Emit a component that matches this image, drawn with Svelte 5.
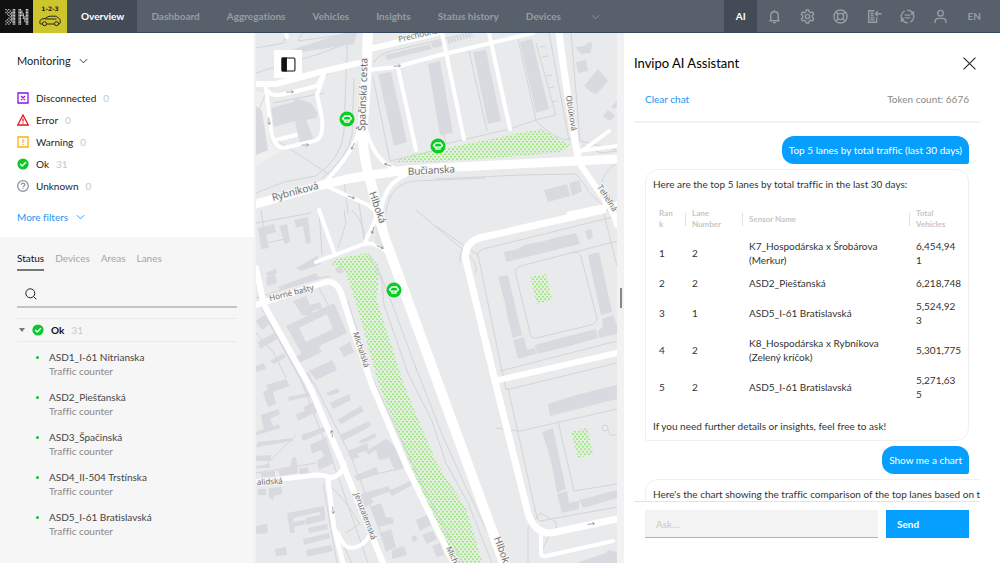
<script>
  const navItems = [
    "Overview",
    "Dashboard",
    "Aggregations",
    "Vehicles",
    "Insights",
    "Status history",
    "Devices",
  ];
  let activeNav = $state("Overview");

  const filters = [
    { name: "Disconnected", icon: "disconnected", count: 0 },
    { name: "Error", icon: "error", count: 0 },
    { name: "Warning", icon: "warning", count: 0 },
    { name: "Ok", icon: "ok", count: 31 },
    { name: "Unknown", icon: "unknown", count: 0 },
  ];

  const tabs = ["Status", "Devices", "Areas", "Lanes"];
  let activeTab = $state("Status");
  let search = $state("");
  let question = $state("");
  let groupOpen = $state(true);

  const devices = [
    "ASD1_I-61 Nitrianska",
    "ASD2_Piešťanská",
    "ASD3_Špačinská",
    "ASD4_II-504 Trstínska",
    "ASD5_I-61 Bratislavská",
  ];

  const columns = ["Ran\nk", "Lane\nNumber", "Sensor Name", "Total\nVehicles"];
  const lanes = [
    [1, 2, "K7_Hospodárska x Šrobárova\n(Merkur)", "6,454,94\n1"],
    [2, 2, "ASD2_Piešťanská", "6,218,748"],
    [3, 1, "ASD5_I-61 Bratislavská", "5,524,92\n3"],
    [4, 2, "K8_Hospodárska x Rybníkova\n(Zelený kríčok)", "5,301,775"],
    [5, 2, "ASD5_I-61 Bratislavská", "5,271,63\n5"],
  ];

  // dot matrix of the logo mark
  const logoDots = [
    "1.1..11..11...11",
    ".1.1.11..111..11",
    "1.1.111..111..11",
    ".1.1111..1111.11",
    "..1.111..1111.11",
    "...1111..11.1111",
    "..1.111..11.1111",
    ".1.1111..11..111",
    "1.1.111..11..111",
    ".1.1.11..11...11",
    "1.1..11..11...11",
  ];

  // thin footpaths and parcel borders
  const paths = [
    "M30 0 28 10 0 15M46 0 42 8 100 0M0 40 22 33 60 22 97 8",
    "M92 0 90 45 88 98Q86 125 60 143L28 149 0 160",
    "M98 45 96 102Q92 125 66 145M75 38 68 45 58 56",
    "M17 70 68 60M22 108 80 146M9 62 0 84",
    "M118 30Q122 20 140 17L200 3M117 44 134 128 180 117M176 30 190 112",
    "M213 18 231 98M262 6 280 87 300 82M280 87 254 96 180 113",
    "M280 88Q300 108 315 107M293 0 313 107M315 0 324 108 361 117M327 112 345 120 361 118",
    "M284 14 290 13M286 24 292 23M290 43 296 42M292 55 298 54M295 69 301 68M280 10 300 82",
    "M180 146 265 142 320 141Q328 150 334 160L352 178M361 130Q340 145 348 157L361 170",
    "M130 180Q133 150 160 148L230 145M0 190 55 180M5 177 10 210 34 205",
    "M63 177 66 222M88 177 90 190 82 215M96 177Q110 190 108 210M103 170 108 206",
    "M92 180 88 148M160 177 205 215Q223 228 220 240M180 193 222 222M204 230Q203 216 210 213",
    "M112 220 126 248 128 272 152 340 176 388 190 430 212 470 236 530",
    "M120 230 135 268 160 335 188 406 209 452 246 530",
    "M222 222Q220 217 235 214L361 183M222 222 250 357M244 338 361 308M250 357 361 330",
    "M260 242Q258 235 265 233L318 219Q323 218 325 224L341 285Q341 290 335 292L280 305Q275 306 274 300Z",
    "M347 177 361 233M315 220 361 208M344 180 358 174",
    "M240 395 264 398 361 376M252 355 281 485 284 488 361 474M302 388 318 458 361 451",
    "M272 495V530M272 495 285 480 300 489 300 498M286 517 293 503",
    "M12 288 70 392M4 272 44 345 78 432 112 530M58 350 96 426 131 516",
    "M92 268 112 335 129 372 170 460 212 540M0 265 63 245 74 243",
    "M70 450Q90 465 104 492M90 500 103 491M83 502 100 540M67 450 81 530M100 446 150 434M114 465 160 448",
    "M0 300 18 320 30 345M62 253 78 283M0 440 60 430M10 432 40 402",
  ];

  const buildings = [
    "M35 17 82 2 89 0H101L98 11 45 19Z",
    "M0 73 6 78 12 117 0 122Z",
    "M15 75 37 69 40 65 55 70 62 80 60 85 50 87 58 107 44 110 39 88 18 94Z",
    "M129 22 174 11 176 16 131 27Z",
    "M175 10 187 7 190 12 177 15Z",
    "M122 41 135 39 151 109 138 113Z",
    "M172 31 184 28 197 100 184 102Z",
    "M217 19 230 17 245 88 232 91Z",
    "M264 9 276 6 293 76 280 80Z",
    "M319 14 328 13 335 8 336 14 334 20 325 21Z",
    "M320 29 330 27 332 38 322 40Z",
    "M328 53 342 36 352 48 341 61 335 59Z",
    "M347 83 352 77 359 83 354 88ZM355 74 361 68V73L358 76Z",
    "M288 157 311 151 314 163 292 169ZM313 150 323 147 326 158 316 163Z",
    "M2 195 18 191 20 199 10 202 13 215 5 216Z",
    "M23 193 31 191 34 209 29 211ZM38 187 52 184 55 210 50 211 47 193 40 195Z",
    "M40 235 61 223 65 231 45 238ZM10 245 19 241 21 250 11 253ZM22 254 60 240 64 246 25 257Z",
    "M10 240 20 236 21 240 12 244ZM79 236 85 232 88 239 82 241Z",
    "M37 268 50 263 54 272 64 269 66 276 56 278 60 283 46 282Z",
    "M30 293 78 270 91 300 46 321ZM43 295 50 309 77 296 71 281Z",
    "M0 288 8 282 14 291 6 297ZM2 309 18 300 21 306 4 316ZM14 328 28 320 30 324 18 331Z",
    "M37 325 62 312 66 319 43 330ZM53 338 76 327 81 337 60 347ZM83 315 94 309 98 319 88 324Z",
    "M0 333 8 330 10 336 0 339ZM10 352 30 346 34 353 14 360ZM45 343 52 339 58 350 50 354Z",
    "M7 359 16 355 20 371 12 374ZM32 364 58 359 59 362 33 368ZM40 381 63 373 65 377 42 388Z",
    "M5 382 22 376 24 381 14 386 18 395 10 400 6 390ZM48 374 57 369 60 380 49 382Z",
    "M0 399 23 391 24 395 0 402ZM2 409 37 405 37 408 0 414ZM45 402 68 394 70 398 47 408Z",
    "M54 412 70 404 78 430 63 437 61 428 68 423 65 417 56 421Z",
    "M0 423 15 422V428H0ZM0 433 14 431V435H0ZM5 439 19 438V444H5ZM22 437 34 435 36 425 40 424 42 440 24 443ZM43 436 52 434 53 440 44 442Z",
    "M74 370 93 361 95 367 77 376ZM70 360 82 355 84 359 74 363ZM81 387 105 373 108 378 85 391ZM84 402 113 388 115 393 87 408Z",
    "M92 418 111 410 113 417 101 421 104 424 95 427ZM103 408 119 400 121 404 105 411ZM110 418 130 406 132 410 112 422Z",
    "M98 443 120 434 123 441 101 448ZM120 418 131 406 143 418 148 434 139 438 133 425 123 427Z",
    "M105 461 132 453 135 458 115 465 118 469 108 475ZM133 458 158 446 160 450 136 463Z",
    "M2 456 10 456V462H2ZM13 455 26 454 26 461 18 463 18 467 13 465Z",
    "M31 480 68 473 69 482 64 484V479L37 485 38 489 49 487V491L38 494 39 500 34 500Z",
    "M0 493 11 491 12 500 0 501ZM19 516 30 514 31 522 20 523Z",
    "M50 485 69 481V487L50 492ZM52 495 71 491 72 496 53 500ZM47 506 73 500 74 505 48 512ZM50 517 75 512 77 518 51 524Z",
    "M114 474 125 470 130 484 137 485 138 490 123 494ZM124 500 135 496 140 514 130 519ZM136 517 148 513 151 522 136 526Z",
    "M160 487 171 482 175 492 164 498ZM166 502 177 498 181 506 171 511ZM176 513 184 510 188 522 181 524ZM155 504 160 502 162 507 157 509Z",
    "M248 219 262 216 268 212 288 208 302 204 320 200 324 211 250 229Z",
    "M329 198 335 196 337 205 332 207Z",
    "M242 244 252 242 266 302 257 305 252 286 249 270Z",
    "M257 307 268 304 271 317 279 315 280 321 262 326Z",
    "M279 312 301 306 340 296 342 305 310 314 281 321Z",
    "M332 222 343 219 356 279 345 282 339 255 336 242Z",
    "M342 298 347 294 346 286 357 282 361 293V301L343 305Z",
    "M292 371 320 362 361 352V366L294 383Z",
    "M286 399 297 395 310 456 301 460 298 444 294 424Z",
    "M301 461 311 458 313 470 323 468 323 476 306 480Z",
    "M323 467 361 457V465L327 475Z",
    "M320 530 350 520 352 517 361 519V530Z",
  ];

  const roads = [
    { d: "M112 -5Q110 60 106 100Q108 128 115 150L128 203 248 530", w: 10 },
    { d: "M0 171 70 151Q92 145 115 142L152 137 180 135 320 128 361 126", w: 9 },
    { d: "M0 51H20L68 38 103 30", w: 6 },
    { d: "M112 37 140 34 184 22 277 0", w: 4 },
    { d: "M114 16 181 0", w: 6 },
    { d: "M28 -5 31 4M10 55 15 97Q18 115 28 115L58 108Q68 106 66 85L61 62 68 42", w: 4 },
    { d: "M12 58Q15 64 29 61L61 53 67 42M20 107 40 102", w: 4 },
    { d: "M142 35 160 117M186 0 208 106M233 0 254 96", w: 4 },
    { d: "M303 0Q312 70 322 125", w: 7 },
    { d: "M322 128 361 185", w: 6 },
    { d: "M322 118 361 113M327 117 353 98", w: 4 },
    { d: "M103 97Q98 118 70 148M110 97Q122 138 150 137", w: 4 },
    { d: "M70 153 112 172 125 182M150 142Q128 150 124 182", w: 4 },
    { d: "M63 177 78 219M60 229 108 211 118 190 122 177M108 211Q120 208 133 221", w: 4 },
    { d: "M0 272 70 249Q80 247 85 260L98 300 116 352 150 432 200 535", w: 6 },
    { d: "M0 235 8 272 53 352 83 422 129 535", w: 6 },
    { d: "M0 449 60 442Q70 442 74 445 88 442 88 430M72 447 78 495 87 530", w: 5 },
    { d: "M82 500Q88 518 100 514 108 512 114 502", w: 4 },
    { d: "M347 177 223 205Q207 211 210 228L240 352 272 480Q278 500 295 500L361 486", w: 7 },
    { d: "M313 181 361 171M352 168 361 193", w: 5 },
    { d: "M243 347 361 320", w: 6 },
    { d: "M285 502V520Q285 524 290 523L357 508", w: 4 },
  ];

  const parks = [
    "M138 129 155 122 180 117 285 96 314 112 305 119 240 125 180 129Z",
    "M75 229 83 225 112 220 122 232 122 255 120 265 148 352 180 429 210 475 227 532H200L166 460 123 352 100 270 90 240 76 231Z",
    "M274 244 290 241 296 267 281 271Z",
    "M315 399 331 395 337 421 322 425Z",
  ];

  const streets = [
    { name: "Prechodná", x: 143, y: 9, angle: -13, size: 8 },
    { name: "Špačinská cesta", x: 109, y: 98, angle: -88, size: 10 },
    { name: "Bučianska", x: 152, y: 142, angle: -3, size: 10 },
    { name: "Rybníková", x: 17, y: 168, angle: -15, size: 10 },
    { name: "Hlboká", x: 113, y: 160, angle: 71, size: 10 },
    { name: "Oblúková", x: 310, y: 63, angle: 81, size: 8 },
    { name: "Teheľná", x: 341, y: 154, angle: 57, size: 8 },
    { name: "Horné bašty", x: 14, y: 268, angle: -14, size: 8 },
    { name: "Michalská", x: 97, y: 300, angle: 72, size: 8 },
    { name: "alidská", x: 1, y: 452, angle: -3, size: 8 },
    { name: "Jeruzalemská", x: 98, y: 461, angle: 69, size: 8 },
    { name: "Michalská", x: 190, y: 515, angle: 65, size: 8 },
    { name: "Hlboká", x: 238, y: 505, angle: 70, size: 10 },
  ];

  const arrows = [
    [34, 59, -5],
    [13, 88, 85],
    [49, 112, -3],
    [97, 113, 115],
    [132, 132, 200],
    [95, 164, 20],
    [141, 33, -5],
    [117, 197, 110],
    [124, 214, 22],
    [76, 401, 260],
    [77, 477, 85],
    [335, 491, -8],
  ];

  const markers = [
    [91, 86],
    [182, 113],
    [138, 257],
  ];
</script>

{#snippet chevron()}
  <svg class="chevron" viewBox="0 0 10 6" aria-hidden="true">
    <path d="m1 1 4 4 4-4" />
  </svg>
{/snippet}

{#snippet statusIcon(kind)}
  <svg class="status-icon {kind}" viewBox="0 0 12 12" aria-hidden="true">
    {#if kind === "disconnected"}
      <path d="M1 1h10v10H1zM4 4l4 4M8 4 4 8" />
    {:else if kind === "error"}
      <path d="M6 1 11.3 11H.7zM6 4.5v3M6 8.6v1" />
    {:else if kind === "warning"}
      <path d="M1 1h10v10H1zM6 3.2v3.6M6 7.8V9" />
    {:else if kind === "ok"}
      <circle cx="6" cy="6" r="5.6" />
      <path d="m3.2 6 2 2 3.7-3.8" />
    {:else}
      <circle cx="6" cy="6" r="5.3" />
      <path d="M4.3 4.8c0-2.3 3.5-2.1 3.5 0C7.8 6 6 6 6 7.3M6 8.2v1" />
    {/if}
  </svg>
{/snippet}

<div class="app">
  <header class="topbar">
    <a class="topbar__logo" href="#home" aria-label="Home">
      <svg viewBox="0 0 32 22" aria-hidden="true">
        {#each logoDots as row, y}
          {#each row as dot, x}
            {#if dot === "1"}
              <rect x={x * 2} y={y * 2} width="1.6" height="1.6" />
            {/if}
          {/each}
        {/each}
      </svg>
    </a>
    <a class="topbar__product" href="#traffic" aria-label="Traffic">
      <svg viewBox="0 0 34 33" aria-hidden="true">
        <text x="17" y="11" text-anchor="middle">1-2-3</text>
        <path
          d="M9.5 24H8q-1.5 0-1.2-1.5l.4-2q.3-1 1.5-1.3l4-1q2.500-2 4.500-2h5q1.500 0 2.500 1l2 2q.8 1 .6 2.500l-.3 1.500q-.2.800-1.200.800h-.6M13.500 24h8M12 19h11.500"
        />
        <circle cx="11.5" cy="23.7" r="2" />
        <circle cx="23.5" cy="23.7" r="2" />
      </svg>
    </a>
    <nav class="topbar__nav">
      {#each navItems as item}
        <button class:active={activeNav === item} onclick={() => (activeNav = item)}>
          {item}
        </button>
      {/each}
      <button class="topbar__more" aria-label="More">{@render chevron()}</button>
    </nav>
    <div class="topbar__tools">
      <button class="active">AI</button>
      <button aria-label="Notifications">
        <svg viewBox="0 0 16 16"><path d="M2.5 12.5h11M4 12V7q0-4 4-4t4 4v5M8 3V1.2M6.5 14.5h3" /></svg>
      </button>
      <button aria-label="Settings">
        <svg viewBox="0 0 16 16">
          <path
            d="M6.700 1h2.600l.5 2 1.500.9 2-.6 1.300 2.300L13.100 7.100v1.800l1.500 1.500-1.300 2.300-2-.6-1.500.9-.5 2H6.700l-.5-2-1.500-.9-2 .6-1.300-2.300 1.500-1.500V7.100L1.400 5.600l1.300-2.300 2 .6L6.200 3z"
          />
          <circle cx="8" cy="8" r="2.3" />
        </svg>
      </button>
      <button aria-label="Help">
        <svg viewBox="0 0 16 16">
          <circle cx="8" cy="8" r="7" />
          <circle cx="8" cy="8" r="3.3" />
          <path d="m3.2 3.2 2.4 2.4M12.8 3.2l-2.4 2.4M3.2 12.8l2.4-2.4M12.8 12.8l-2.4-2.4" />
        </svg>
      </button>
      <button aria-label="Import report">
        <svg viewBox="0 0 16 16">
          <path d="M8 1.800H1.800v12.400h8.400V9M3.800 4.500H7M3.800 6.800H7M3.800 9h4M3.800 11.500h4M15.500 5H9M11.500 2.300 9 5l2.500 2.700" />
        </svg>
      </button>
      <button aria-label="Synchronisation">
        <svg viewBox="0 0 16 16">
          <path d="M5 2A6.700 6.700 0 0 0 3 12.500M3.300 9.600v3H.5M7.500 1.200A6.700 6.700 0 0 1 13.500 4.500M11 14A6.700 6.700 0 0 0 13 3.500M12.700 6.400v-3h2.800M8.500 14.800A6.700 6.700 0 0 1 4 13.200M5 6.500h6M5 9.500h6" />
        </svg>
      </button>
      <button aria-label="Account">
        <svg viewBox="0 0 16 16"><circle cx="8" cy="4.5" r="3" /><path d="M2.3 15v-1.5q0-3.500 3.500-3.500h4.400q3.500 0 3.500 3.500V15" /></svg>
      </button>
      <button>EN</button>
    </div>
  </header>

  <main class="workspace">
    <aside class="sidebar">
      <section class="monitoring">
        <button class="monitoring__title">Monitoring {@render chevron()}</button>
        <ul class="monitoring__filters">
          {#each filters as filter}
            <li>
              {@render statusIcon(filter.icon)}
              <span>{filter.name}</span>
              <span class="count">{filter.count}</span>
            </li>
          {/each}
        </ul>
        <button class="monitoring__more">More filters {@render chevron()}</button>
      </section>

      <section class="devices">
        <div class="devices__tabs">
          {#each tabs as tab}
            <button class:active={activeTab === tab} onclick={() => (activeTab = tab)}>{tab}</button>
          {/each}
        </div>
        <label class="devices__search">
          <svg viewBox="0 0 12 12" aria-hidden="true"><circle cx="5.3" cy="5.3" r="4.5" /><path d="m8.5 8.5 2.8 2.8" /></svg>
          <input type="text" aria-label="Search" bind:value={search} />
        </label>
        <button class="devices__group" onclick={() => (groupOpen = !groupOpen)}>
          <span class="caret"></span>
          {@render statusIcon("ok")}
          <span>Ok</span>
          <span class="count">31</span>
        </button>
        {#if groupOpen}
          <ul class="devices__list">
            {#each devices as device}
              <li>
                <span class="name">{device}</span>
                <span class="type">Traffic counter</span>
              </li>
            {/each}
          </ul>
        {/if}
      </section>
    </aside>

    <section class="map">
      <svg class="map__canvas" viewBox="0 0 361 530" preserveAspectRatio="xMinYMin slice" role="img" aria-label="Map">
        <defs>
          <pattern id="grass" width="4" height="5" patternUnits="userSpaceOnUse">
            <rect width="4" height="5" fill="#e3efdf" />
            <circle cx="1" cy="1.2" r="0.9" fill="#8fe66a" />
            <circle cx="3" cy="3.7" r="0.9" fill="#8fe66a" />
          </pattern>
        </defs>
        <path d="M0 58 8 60 14 110 26 118 0 133Z" fill="#eff0ef" />
        {#each parks as d}
          <path {d} fill="url(#grass)" />
        {/each}
        {#each paths as d}
          <path {d} class="path" />
        {/each}
        {#each buildings as d}
          <path {d} class="building" />
        {/each}
        {#each roads as road}
          <path d={road.d} class="road" stroke-width={road.w} />
        {/each}
        <path d="M120 192 128 215 119 211Z" fill="#e2e3e6" />
        <path d="M192 8 216 1" class="parking" />
        <circle cx="349" cy="395" r="3" class="path" />
        <path d="m352 397 2 5h7" class="path" />
        {#each arrows as [x, y, angle]}
          <path d="M-3.5 0h7M1.5-1.5l2 1.5-2 1.5" class="arrow" transform="translate({x} {y}) rotate({angle})" />
        {/each}
        {#each streets as street}
          <text font-size={street.size} transform="translate({street.x} {street.y}) rotate({street.angle})">
            {street.name}
          </text>
        {/each}
        {#each markers as [x, y]}
          <g class="marker" transform="translate({x} {y})">
            <circle r="7.5" />
            <path d="M-4.5-.5-2-3h4.500l2 2.500L3 1.200h-6zM-2.500 3.200h5M-2 .8v2.400M2 .8v2.400" />
          </g>
        {/each}
      </svg>
      <button class="map__toggle" aria-label="Toggle sidebar">
        <svg viewBox="0 0 14 14"><rect x="1" y="1" width="12" height="12" rx="1" /><path d="M1 1h4v12H1z" /></svg>
      </button>
    </section>

    <div class="divider"><span></span></div>

    <section class="assistant">
      <div class="assistant__header">
        <h2>Invipo AI Assistant</h2>
        <button aria-label="Close">
          <svg viewBox="0 0 12 12"><path d="m.5.5 11 11M11.5.5l-11 11" /></svg>
        </button>
      </div>
      <div class="assistant__bar">
        <button>Clear chat</button>
        <span>Token count: 6676</span>
      </div>
      <div class="assistant__chat">
        <p class="question">Top 5 lanes by total traffic (last 30 days)</p>
        <div class="answer">
          <p>Here are the top 5 lanes by total traffic in the last 30 days:</p>
          <table>
            <thead>
              <tr>
                {#each columns as column}
                  <th><span>{column}</span></th>
                {/each}
              </tr>
            </thead>
            <tbody>
              {#each lanes as lane}
                <tr>
                  {#each lane as cell}
                    <td>{cell}</td>
                  {/each}
                </tr>
              {/each}
            </tbody>
          </table>
          <p>If you need further details or insights, feel free to ask!</p>
        </div>
        <p class="question">Show me a chart</p>
        <div class="answer answer--wide">
          <p>Here's the chart showing the traffic comparison of the top lanes based on total vehicles:</p>
        </div>
      </div>
      <form class="assistant__form" onsubmit={(e) => e.preventDefault()}>
        <input type="text" placeholder="Ask..." aria-label="Ask" bind:value={question} />
        <button>Send</button>
      </form>
    </section>
  </main>
</div>

<style>
  :global(body) {
    margin: 0;
  }

  .app {
    display: flex;
    flex-direction: column;
    height: 100vh;
    overflow: hidden;
    font-family: Lato, "Liberation Sans", sans-serif;
    font-size: 10px;
    line-height: 14px;
    font-variant-ligatures: none;
    color: #222;
    background: #fff;
  }

  button,
  input {
    font: inherit;
    color: inherit;
    background: none;
    border: 0;
    border-radius: 0;
    margin: 0;
    padding: 0;
    outline: none;
  }

  button {
    cursor: pointer;
  }

  ul {
    list-style: none;
    margin: 0;
    padding: 0;
  }

  p,
  h2 {
    margin: 0;
  }

  svg {
    fill: none;
    stroke: currentColor;
  }

  .chevron {
    width: 9px;
    height: 6px;
  }

  .count {
    color: #c8c8c8;
  }

  /* top bar */
  .topbar {
    display: flex;
    flex: none;
    height: 33px;
    box-sizing: border-box;
    background: #58616b;
    border-bottom: 1px solid #32485c;
    color: #979da3;
    font-weight: bold;
  }

  .topbar__logo,
  .topbar__product {
    display: flex;
    align-items: center;
    justify-content: center;
    width: 33px;
    height: 33px;
    background: #111;
  }

  .topbar__logo svg {
    width: 24px;
    height: 16px;
    fill: #ddd;
    stroke: none;
  }

  .topbar__product {
    width: 34px;
    background: #cdc52b;
    color: #222;
  }

  .topbar__product svg {
    width: 34px;
    height: 33px;
  }

  .topbar__product text {
    font-family: "DejaVu Sans", sans-serif;
    font-size: 6px;
    font-weight: bold;
    fill: #222;
    stroke: none;
  }

  .topbar__nav {
    display: flex;
    flex: 1;
  }

  .topbar__nav button {
    padding: 0 13px 0 14px;
  }

  .topbar__nav .topbar__more {
    padding: 0 17px;
  }

  .topbar button.active {
    background: #424b56;
    color: #fff;
  }

  .topbar__tools {
    display: flex;
    width: 267px;
    padding-right: 9px;
  }

  .topbar__tools button {
    display: flex;
    flex: 1;
    align-items: center;
    justify-content: center;
  }

  .topbar__tools svg {
    width: 15px;
    height: 15px;
    stroke-width: 1.5;
  }

  .workspace {
    display: flex;
    flex: 1;
    min-height: 0;
  }

  /* sidebar */
  .sidebar {
    display: flex;
    flex-direction: column;
    flex: none;
    width: 254px;
    border-right: 2px solid #f1f1f1;
  }

  .monitoring {
    padding: 21px 17px 13px;
  }

  .monitoring__title {
    display: flex;
    align-items: center;
    gap: 8px;
    font-size: 11px;
  }

  .monitoring__filters {
    padding: 19px 0 13px;
  }

  .monitoring__filters li {
    display: flex;
    align-items: center;
    gap: 7px;
    height: 22px;
  }

  .monitoring__more {
    display: flex;
    align-items: center;
    gap: 8px;
    color: #1c94f4;
  }

  .status-icon {
    width: 12px;
    height: 12px;
    stroke-width: 1.3;
  }

  .disconnected {
    color: #8a12e8;
  }

  .error {
    color: #e8141e;
  }

  .warning {
    color: #ffae0d;
  }

  .unknown {
    color: #8d96a5;
  }

  .ok circle {
    fill: #0cc82c;
    stroke: none;
  }

  .ok path {
    stroke: #fff;
    stroke-width: 1.5;
  }

  .devices {
    flex: 1;
    padding: 12px 17px;
    background: #f6f6f6;
  }

  .devices__tabs {
    display: flex;
    gap: 11px;
    color: #a5a5a5;
  }

  .devices__tabs button {
    padding: 2px 0 4px;
    border-bottom: 2px solid transparent;
  }

  .devices__tabs .active {
    color: #111;
    border-color: #777;
  }

  .devices__search {
    display: flex;
    align-items: center;
    gap: 8px;
    height: 25px;
    padding: 10px 0 0 8px;
    border-bottom: 2px solid #c4c4c4;
  }

  .devices__search svg {
    width: 12px;
    height: 12px;
  }

  .devices__search input {
    flex: 1;
    min-width: 0;
  }

  .devices__group {
    display: flex;
    align-items: center;
    gap: 7px;
    width: 100%;
    height: 24px;
    margin-top: 10px;
    padding-left: 2px;
    border-top: 1px solid #eaeaea;
    border-bottom: 1px solid #eaeaea;
    color: #111;
    font-weight: bold;
  }

  .devices__group .count {
    font-weight: normal;
  }

  .caret {
    border: 3px solid transparent;
    border-top: 4px solid #777;
    border-bottom: 0;
  }

  .devices__list {
    padding-top: 8px;
  }

  .devices__list li {
    position: relative;
    display: flex;
    flex-direction: column;
    padding: 0 0 12px 32px;
  }

  .devices__list li::before {
    content: "";
    position: absolute;
    top: 6px;
    left: 19px;
    width: 3px;
    height: 3px;
    border-radius: 50%;
    background: #0cc82c;
  }

  .devices__list .name {
    color: #444;
  }

  .devices__list .type {
    color: #888;
  }

  /* map */
  .map {
    position: relative;
    flex: 1;
    min-width: 0;
    background: #e9eaec;
    overflow: hidden;
  }

  .map__canvas {
    display: block;
    width: 100%;
    height: 100%;
    stroke: none;
  }

  .map__canvas text {
    fill: #666;
    stroke: #f6f6f6;
    stroke-width: 2;
    paint-order: stroke;
    font-family: "Open Sans", sans-serif;
  }

  .path {
    stroke: #d2d4d7;
  }

  .building {
    fill: #d9dadf;
    fill-rule: evenodd;
  }

  .road {
    stroke: #fff;
    stroke-linecap: round;
    stroke-linejoin: round;
  }

  .parking {
    stroke: #d5d7db;
    stroke-width: 6;
    stroke-dasharray: 2 1;
  }

  .arrow {
    stroke: #888;
    stroke-width: 0.7;
  }

  .marker circle {
    fill: #08cf22;
  }

  .marker path {
    stroke: #fff;
    stroke-width: 1.3;
  }

  .map__toggle {
    position: absolute;
    top: 17px;
    left: 18px;
    display: flex;
    align-items: center;
    justify-content: center;
    width: 28px;
    height: 28px;
    background: #fff;
    color: #111;
  }

  .map__toggle svg {
    width: 15px;
    height: 15px;
  }

  .map__toggle path {
    fill: #111;
  }

  .divider {
    display: flex;
    flex: none;
    align-items: center;
    justify-content: center;
    width: 7px;
    background: #f2f2f2;
  }

  .divider span {
    width: 2px;
    height: 20px;
    background: #888;
  }

  /* assistant */
  .assistant {
    display: flex;
    flex-direction: column;
    flex: none;
    width: 376px;
    box-sizing: border-box;
    padding: 20px 20px 25px 10px;
    color: #333;
  }

  .assistant__header {
    display: flex;
    align-items: center;
    justify-content: space-between;
    padding-right: 4px;
    height: 20px;
  }

  .assistant__header h2 {
    font-size: 13px;
    font-weight: normal;
    color: #000;
  }

  .assistant__header svg {
    display: block;
    width: 13px;
    height: 13px;
    color: #222;
  }

  .assistant__bar {
    display: flex;
    justify-content: space-between;
    padding: 19px 11px 15px;
    border-bottom: 2px solid #f2f2f2;
    color: #8a8a8a;
  }

  .assistant__bar button {
    color: #1c94f4;
  }

  .assistant__chat {
    display: flex;
    flex-direction: column;
    flex: 1;
    min-height: 0;
    padding: 13px 0 0 11px;
    overflow: hidden;
    border-bottom: 1px solid #e4e4e4;
  }

  .question {
    flex: none;
    align-self: flex-end;
    margin-right: 11px;
    padding: 7px;
    border-radius: 12px 12px 2px 12px;
    background: #069ffd;
    color: #fff;
  }

  .answer {
    flex: none;
    margin: 5px 11px 5px 0;
    padding: 7px;
    border: 1px solid #f0f0f0;
    border-radius: 13px 13px 13px 2px;
  }

  .answer--wide {
    margin-right: -60px;
    white-space: nowrap;
  }

  table {
    width: 100%;
    margin: 17px 0 14px;
    border-collapse: collapse;
    table-layout: fixed;
  }

  th,
  td {
    padding: 5px 0 4px 6px;
    text-align: left;
    white-space: pre-line;
  }

  th {
    padding: 0 0 4px;
    font-size: 8px;
    line-height: 11px;
    color: #c6c6c6;
  }

  th span {
    display: flex;
    align-items: center;
    height: 22px;
    padding-left: 6px;
  }

  th + th span::before {
    content: "";
    align-self: center;
    width: 1px;
    height: 13px;
    margin: 0 6px 0 -7px;
    background: #e2e2e2;
  }

  th:nth-child(1) {
    width: 33px;
  }

  th:nth-child(2) {
    width: 57px;
  }

  th:nth-child(4) {
    width: 51px;
  }

  .assistant__form {
    display: flex;
    gap: 8px;
    height: 28px;
    padding: 8px 11px 0;
  }

  .assistant__form input {
    flex: 1;
    min-width: 0;
    padding: 0 11px;
    background: #f3f3f3;
    border-bottom: 1px solid #b5b5b5;
  }

  .assistant__form input::placeholder {
    color: #c8c8c8;
    opacity: 1;
  }

  .assistant__form button {
    width: 83px;
    padding-left: 11px;
    text-align: left;
    background: #069ffd;
    color: #fff;
    font-weight: bold;
  }
</style>
